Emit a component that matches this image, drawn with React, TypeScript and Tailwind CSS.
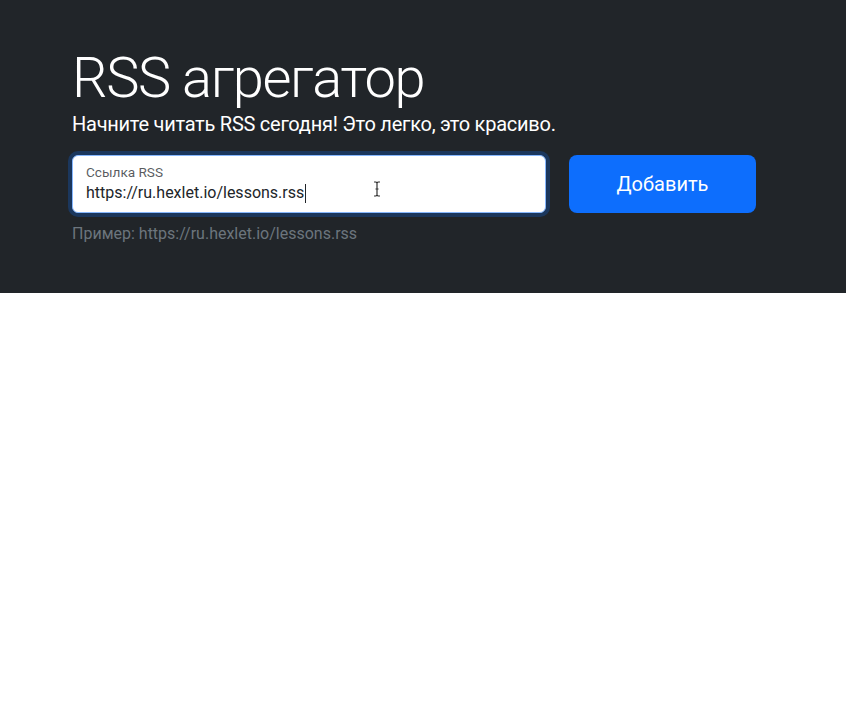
export default function App() {
  return (
    <div className="min-h-[710px] w-full bg-white font-['Roboto','Liberation_Sans',sans-serif]">
      <section className="bg-[#212529] pl-[72px] pr-[90px] pt-[45px] pb-[47px]">
        <h1 className="text-[56px] leading-[1.2] font-light tracking-[-1.4px] text-white">RSS агрегатор</h1>
        <p className="text-[20px] leading-[1.5] tracking-[-0.25px] text-white mt-[-3px]">
          Начните читать RSS сегодня! Это легко, это красиво.
        </p>
        <form className="mt-[16px] flex gap-[23px]">
          <div className="relative w-[474px] h-[58px] rounded-[6px] bg-white border border-[#86b7fe] shadow-[0_0_0_4px_rgba(13,110,253,0.25)]">
            <label className="absolute left-[13px] top-[8px] text-[13.6px] leading-[1.2] text-[#212529]/75">
              Ссылка RSS
            </label>
            <div className="absolute left-[13px] top-[25px] flex items-center text-[16px] leading-[1.5] text-[#212529]">
              https://ru.hexlet.io/lessons.rss
              <span className="ml-[1px] inline-block w-px h-[19px] bg-[#212529]" />
            </div>
            <svg
              className="absolute left-[300px] top-[25px]"
              width="8"
              height="16"
              viewBox="0 0 8 16"
              fill="none"
              stroke="#333"
              strokeWidth="1.2"
            >
              <path d="M1 1h2l1 1 1-1h2M4 2v12M1 15h2l1-1 1 1h2M2.5 8h3" />
            </svg>
          </div>
          <button
            type="button"
            className="w-[187px] h-[58px] rounded-[8px] bg-[#0d6efd] text-white text-[20px] font-normal"
          >
            Добавить
          </button>
        </form>
        <p className="mt-[9px] text-[16px] leading-[1.5] text-[#6c757d]">Пример: https://ru.hexlet.io/lessons.rss</p>
      </section>
    </div>
  );
}
